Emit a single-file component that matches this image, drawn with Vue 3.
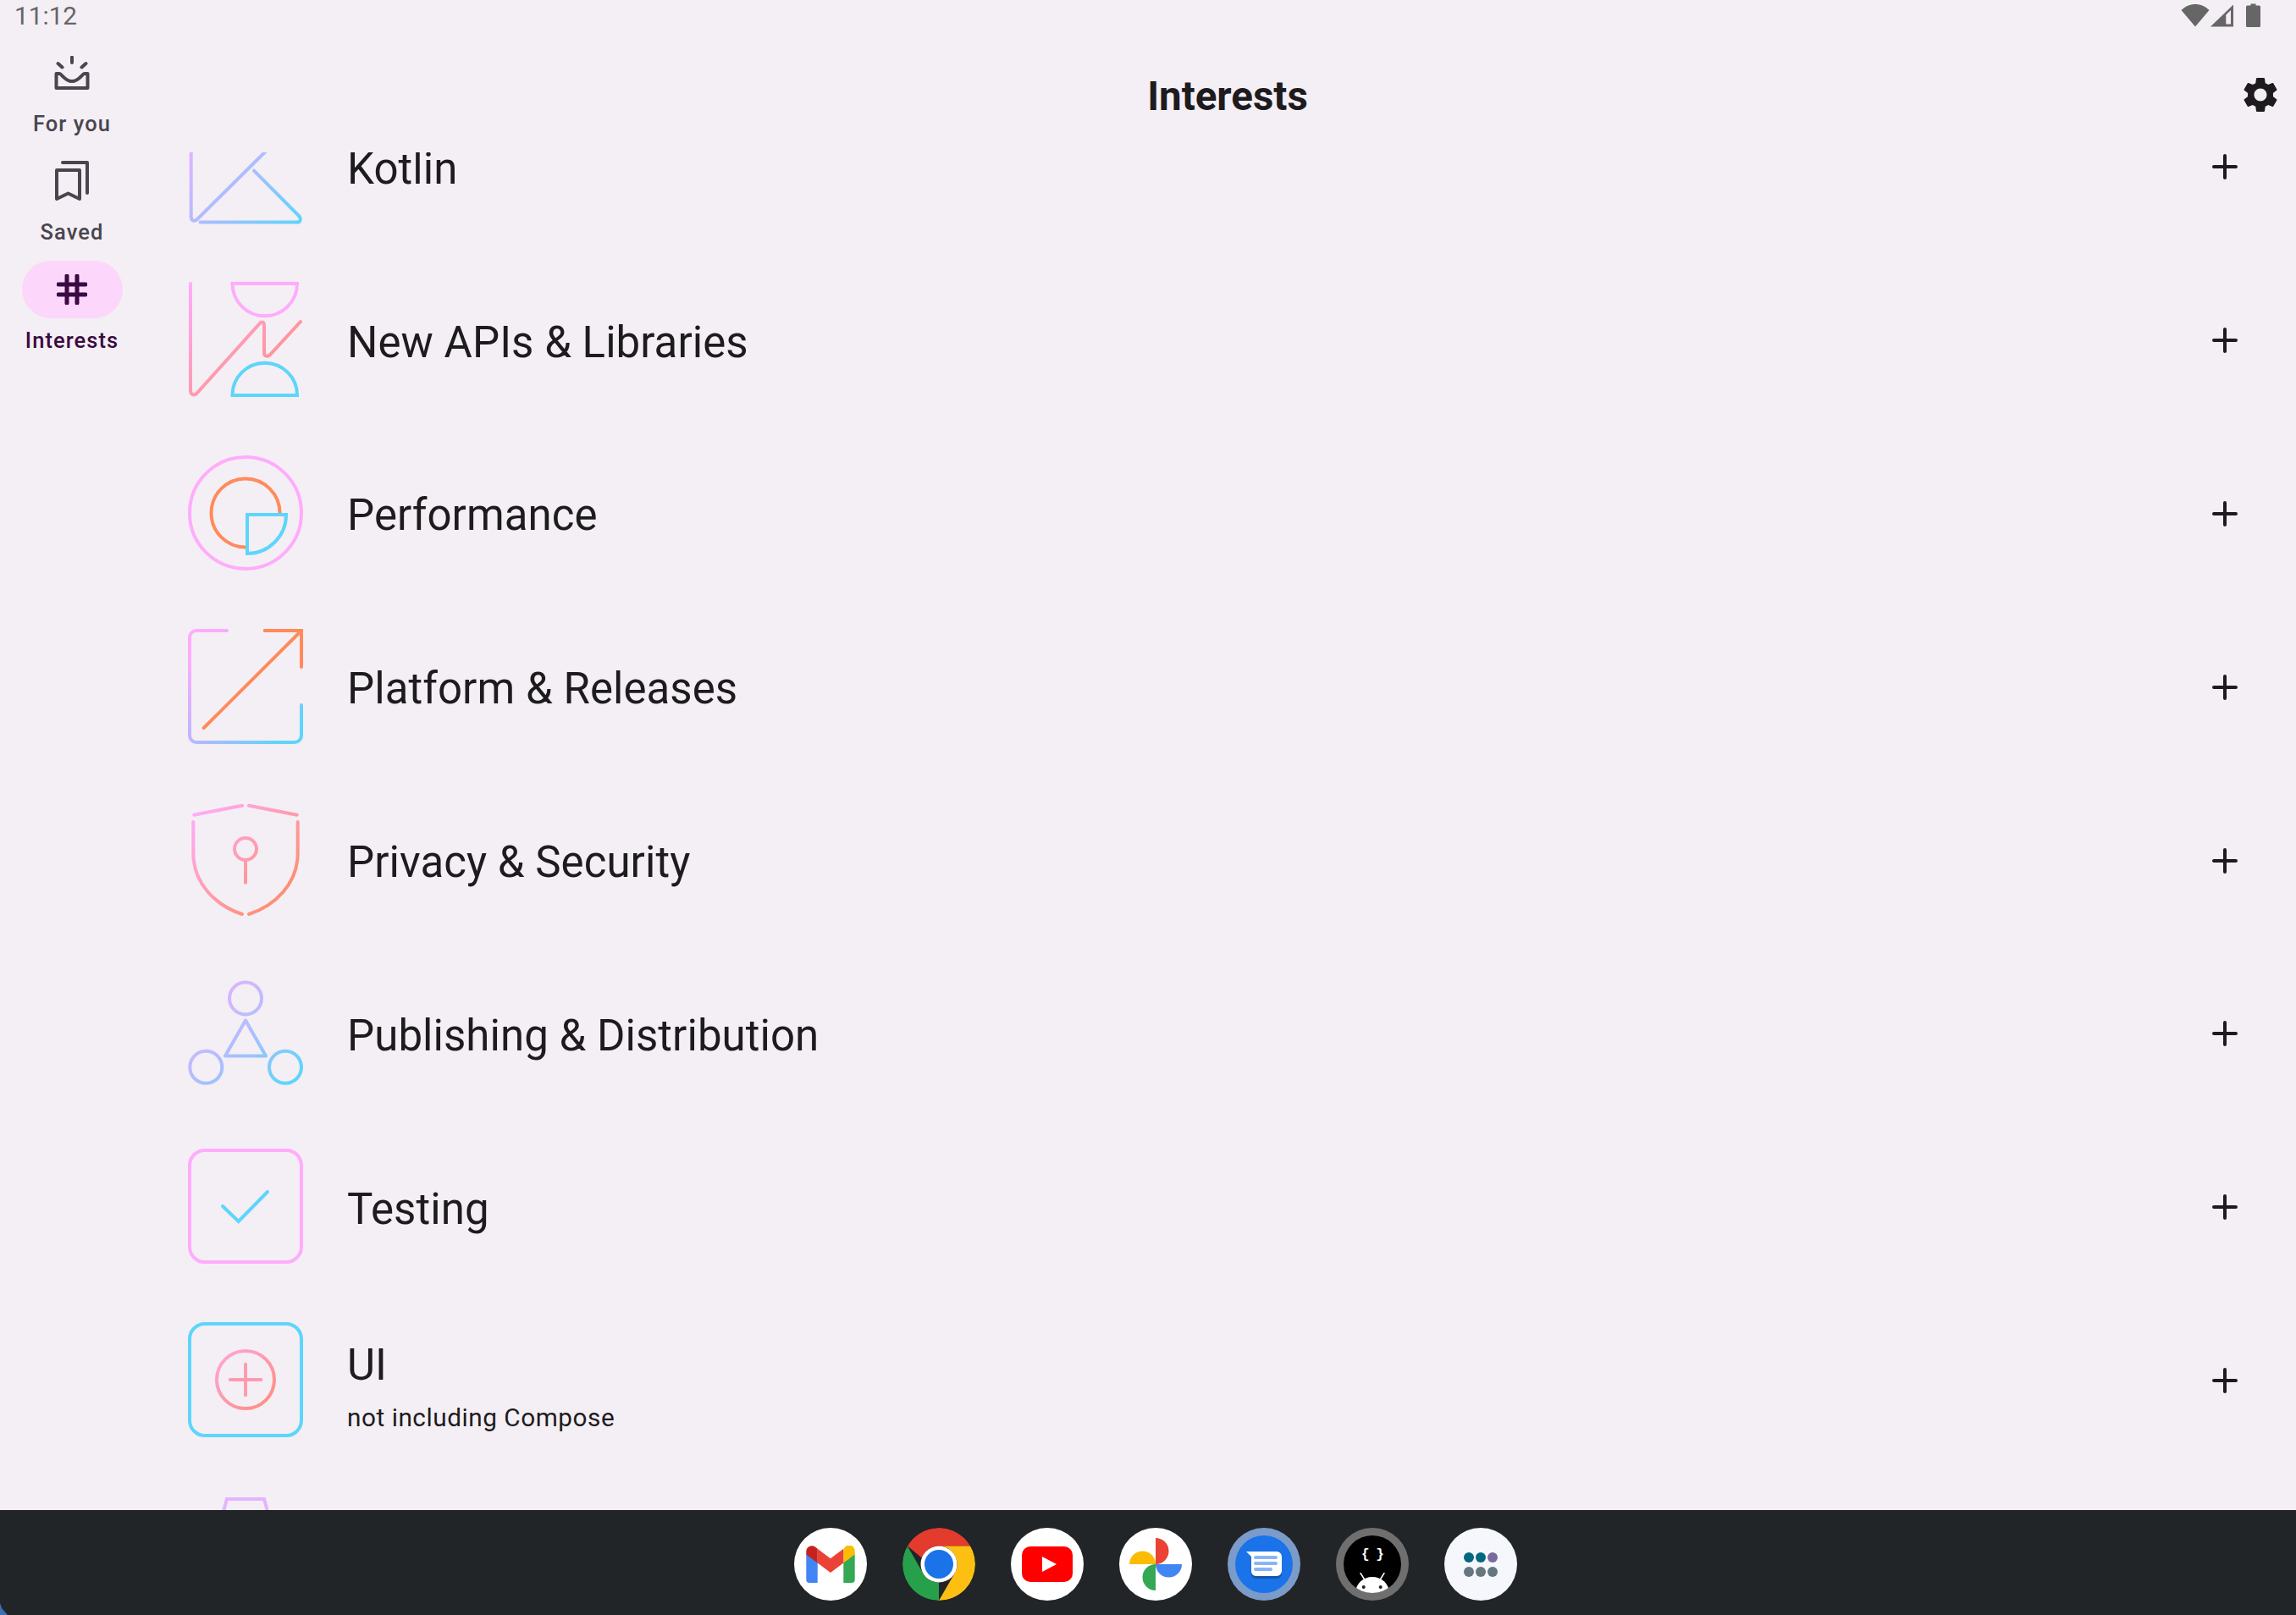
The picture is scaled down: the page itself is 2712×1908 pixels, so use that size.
<template>
  <div class="screen">
    <div class="status">
      <span class="clock">11:12</span>
      <div class="status-icons">
        <svg width="34" height="28" viewBox="0 0 34 28"><path d="M.5 8C5 3.500 11 1 17 1S29 3.500 33.500 8L17 27.500Z" fill="#666" /></svg>
        <svg class="signal" width="27" height="27" viewBox="0 0 27 27"><path d="M0 26.500 27 .5V26.500Z" fill="#666" /><path d="M18.300 12.500 24 7V23.500H18.300Z" fill="#f4eff4" /></svg>
        <svg class="battery" width="17" height="28" viewBox="0 0 17 28"><path d="M5.500 2.500V.5H11.500V2.500H15.500A1.500 1.500 0 0 1 17 4V26.500A1.500 1.500 0 0 1 15.500 28H1.500A1.500 1.500 0 0 1 0 26.500V4A1.500 1.500 0 0 1 1.500 2.500Z" fill="#666" /></svg>
      </div>
    </div>

    <div class="main">
      <nav class="rail">
        <div v-for="item in navItems" :key="item.label" class="rail-item" :class="{ active: item.active }">
          <div class="pill">
            <svg v-if="item.icon === 'foryou'" width="44" height="40" viewBox="0 0 44 40" fill="none" stroke="#49454f" stroke-width="4" stroke-linecap="round" stroke-linejoin="round">
              <path d="M22 1.500V8M5.500 9 10.500 13.500M38.500 9 33.500 13.500" />
              <path d="M7 21H3.500V38H40.500V21H37C34 21 30.500 30 22 30S10 21 7 21Z" />
            </svg>
            <svg v-else-if="item.icon === 'saved'" width="40" height="48" viewBox="0 0 40 48" fill="none" stroke="#49454f" stroke-width="4" stroke-linejoin="round" stroke-linecap="round">
              <path d="M2 11H29V45L15.500 38.500 2 45Z" />
              <path d="M9 2H38V38" />
            </svg>
            <svg v-else width="36" height="36" viewBox="0 0 36 36" fill="none" stroke="#3a0a40" stroke-width="5" stroke-linecap="round">
              <path d="M12 2V34M24 2V34M2 12H34M2 24H34" />
            </svg>
          </div>
          <span class="rail-label">{{ item.label }}</span>
        </div>
      </nav>

      <div class="content">
        <header class="topbar">
          <h1 class="title">Interests</h1>
          <svg class="gear" width="50" height="50" viewBox="0 0 24 24"><path fill="#1d1b1e" d="M19.140 12.940c.040-.300.060-.610.060-.940 0-.320-.020-.640-.070-.940l2.030-1.580a.49.49 0 0 0 .120-.610l-1.920-3.320a.488.488 0 0 0-.590-.220l-2.390.960c-.500-.380-1.030-.700-1.620-.940l-.360-2.540a.484.484 0 0 0-.480-.410h-3.840c-.240 0-.430.170-.470.410l-.360 2.540c-.590.240-1.130.570-1.620.940l-2.390-.960c-.220-.080-.470 0-.590.220L2.740 8.870c-.120.210-.080.470.120.610l2.030 1.580c-.050.300-.090.630-.090.940s.020.640.070.940l-2.030 1.580a.49.49 0 0 0-.120.610l1.920 3.320c.120.220.370.290.590.220l2.390-.960c.500.380 1.030.700 1.620.940l.360 2.540c.050.240.240.410.480.410h3.840c.240 0 .440-.170.470-.410l.360-2.540c.590-.240 1.130-.560 1.620-.940l2.390.960c.220.080.470 0 .590-.220l1.920-3.320c.120-.220.070-.470-.120-.610l-2.010-1.580zM12 15.600c-1.980 0-3.600-1.620-3.600-3.600s1.620-3.600 3.600-3.600 3.600 1.620 3.600 3.600-1.620 3.600-3.600 3.600z" /></svg>
        </header>

        <div class="list">
          <div class="list-inner">
            <div v-for="topic in topics" :key="topic.id" class="row">
              <svg class="topic-icon" width="140" height="140" viewBox="0 0 140 140" fill="none" stroke-width="4" stroke-linecap="round">
                <template v-if="topic.id === 'kotlin'">
                  <defs>
                    <linearGradient id="g-kotlin" gradientUnits="userSpaceOnUse" x1="0" y1="30" x2="130" y2="140">
                      <stop offset="0" stop-color="#f0b0ff" /><stop offset=".5" stop-color="#abbdff" /><stop offset="1" stop-color="#5dd5fc" />
                    </linearGradient>
                  </defs>
                  <path stroke="url(#g-kotlin)" d="M5.700 0V130C5.700 135 10 136 13 133L136 11" />
                  <path stroke="url(#g-kotlin)" d="M80 75.600 133 129C136 132 135 136.600 131 136.600H16.500" />
                </template>
                <template v-else-if="topic.id === 'apis'">
                  <defs>
                    <linearGradient id="g-apis" gradientUnits="userSpaceOnUse" x1="5" y1="0" x2="130" y2="140">
                      <stop offset="0" stop-color="#ffacfd" /><stop offset="1" stop-color="#ff8a70" />
                    </linearGradient>
                  </defs>
                  <path stroke="url(#g-apis)" d="M5 4V130C5 135 9 137 12 134L87 51C90 48 92 50 92 53V86C92 90 96 91 99 88L135 49" />
                  <path stroke="#ffacfd" d="M54.500 4H131A38.250 38.250 0 0 1 54.500 4Z" />
                  <path stroke="#5dd5fc" d="M54.500 136H131A38.250 38.250 0 0 0 54.500 136Z" />
                </template>
                <template v-else-if="topic.id === 'performance'">
                  <circle cx="70" cy="70" r="66" stroke="#ffacfd" />
                  <path stroke="#ff8a5c" stroke-linecap="butt" d="M70 110.500A40.500 40.500 0 1 1 110.500 70" />
                  <path stroke="#5dd5fc" d="M72 72H118A46 46 0 0 1 72 118Z" stroke-linecap="butt" />
                </template>
                <template v-else-if="topic.id === 'platform'">
                  <defs>
                    <linearGradient id="g-platform" gradientUnits="userSpaceOnUse" x1="0" y1="40" x2="110" y2="140">
                      <stop offset="0" stop-color="#ffacfd" /><stop offset=".5" stop-color="#b3b8ff" /><stop offset="1" stop-color="#5dd5fc" />
                    </linearGradient>
                  </defs>
                  <path stroke="url(#g-platform)" d="M48 4H12A8 8 0 0 0 4 12V128A8 8 0 0 0 12 136H128A8 8 0 0 0 136 128V92" />
                  <path stroke="#ff8a5c" d="M92.700 4H136V47M20.700 119 136 4" />
                </template>
                <template v-else-if="topic.id === 'privacy'">
                  <defs>
                    <linearGradient id="g-privacy" gradientUnits="userSpaceOnUse" x1="10" y1="10" x2="130" y2="130">
                      <stop offset="0" stop-color="#ffacfd" /><stop offset="1" stop-color="#ff8a5c" />
                    </linearGradient>
                  </defs>
                  <g stroke="url(#g-privacy)">
                    <path d="M9.300 16.700 66 5.700M74 5.700 130.700 16.700" />
                    <path d="M8.300 25V62C8.300 98 35 124 66 134M131.700 25V62C131.700 98 105 124 74 134" />
                    <circle cx="70" cy="57" r="13" />
                    <path d="M70 70V96.700" />
                  </g>
                </template>
                <template v-else-if="topic.id === 'publishing'">
                  <defs>
                    <linearGradient id="g-publishing" gradientUnits="userSpaceOnUse" x1="20" y1="15" x2="125" y2="125">
                      <stop offset="0" stop-color="#ecb2ff" /><stop offset=".55" stop-color="#a9bfff" /><stop offset="1" stop-color="#5dd5fc" />
                    </linearGradient>
                  </defs>
                  <g stroke="url(#g-publishing)">
                    <circle cx="70" cy="29.500" r="19" />
                    <circle cx="23.300" cy="110.800" r="19" />
                    <circle cx="117" cy="110.800" r="19" />
                    <path stroke-linejoin="round" d="M70 55.500 94 97.500H46Z" />
                  </g>
                </template>
                <template v-else-if="topic.id === 'testing'">
                  <rect x="4" y="4" width="132" height="132" rx="18" stroke="#ffacfd" />
                  <path stroke="#5dd5fc" d="M43 70 61.700 88 96 53" />
                </template>
                <template v-else-if="topic.id === 'ui'">
                  <defs>
                    <linearGradient id="g-ui" gradientUnits="userSpaceOnUse" x1="40" y1="40" x2="100" y2="100">
                      <stop offset="0" stop-color="#ffa5d6" /><stop offset="1" stop-color="#ff8d80" />
                    </linearGradient>
                  </defs>
                  <rect x="4" y="4" width="132" height="132" rx="18" stroke="#5dd5fc" />
                  <circle cx="70" cy="70" r="34" stroke="url(#g-ui)" />
                  <path stroke="#ff9ab0" d="M51.700 70H88.300M70 51.700V88.300" />
                </template>
                <template v-else>
                  <path stroke="#e4b4ff" stroke-linecap="butt" d="M42 28 48 6H92L98 28" />
                </template>
              </svg>
              <div class="topic-text">
                <div class="topic-name">{{ topic.name }}</div>
                <div v-if="topic.sub" class="topic-sub">{{ topic.sub }}</div>
              </div>
              <svg v-if="topic.name" class="add" width="30" height="30" viewBox="0 0 30 30" stroke="#1d1b1e" stroke-width="4" stroke-linecap="round"><path d="M15 2V28M2 15H28" /></svg>
            </div>
          </div>
        </div>
      </div>
    </div>

    <div class="dock">
      <div class="app white">
        <svg width="58" height="44" viewBox="0 0 60 46">
          <path d="M0 10 14 20V46H4A4 4 0 0 1 0 42Z" fill="#4285f4" />
          <path d="M46 20 60 10V42A4 4 0 0 1 56 46H46Z" fill="#34a853" />
          <path d="M46 6A7 7 0 0 1 60 7V11L46 21.500Z" fill="#fbbc04" />
          <path d="M14 4 30 16 46 4V21.500L30 33.500 14 21.500Z" fill="#ea4335" />
          <path d="M0 7A7 7 0 0 1 11 1.500L14 4V21.500L0 11Z" fill="#c5221f" />
        </svg>
      </div>
      <div class="app">
        <svg width="86" height="86" viewBox="0 0 86 86">
          <path d="M43 0A43 43 0 0 1 80.200 21.500H43A21.500 21.500 0 0 0 22.800 35.500L6 21.500A43 43 0 0 1 43 0Z" fill="#e33b2e" />
          <path d="M5.800 21.500 24.400 53.800A21.500 21.500 0 0 0 43 64.500L43 86A43 43 0 0 1 5.800 21.500Z" fill="#27a04b" />
          <path d="M80.200 21.500A43 43 0 0 1 43 86L61.600 53.800A21.500 21.500 0 0 0 61.600 32.200 21.500 21.500 0 0 0 43 21.500Z" fill="#fdc012" />
          <circle cx="43" cy="43" r="21.500" fill="#fff" />
          <circle cx="43" cy="43" r="17" fill="#1a73e8" />
        </svg>
      </div>
      <div class="app white">
        <svg width="60" height="42" viewBox="0 0 60 42">
          <rect width="60" height="42" rx="10" fill="#f00" />
          <path d="M24 12 41 21 24 30Z" fill="#fff" />
        </svg>
      </div>
      <div class="app white">
        <svg width="62" height="62" viewBox="0 0 62 62">
          <path d="M31 0A15.500 15.500 0 0 1 31 31Z" fill="#ea4335" />
          <path d="M31 31H62A15.500 15.500 0 0 1 31 31Z" fill="#4285f4" />
          <path d="M31 31V62A15.500 15.500 0 0 1 31 31Z" fill="#34a853" />
          <path d="M0 31A15.500 15.500 0 0 1 31 31Z" fill="#fbbc04" />
        </svg>
      </div>
      <div class="app ring blue">
        <div class="app-inner msg">
          <svg width="42" height="33" viewBox="0 0 42 33">
            <path d="M6 4H36A6 6 0 0 1 42 10V26A6 6 0 0 1 36 33H12A6 6 0 0 1 6 26Z" fill="#1557b0" />
            <path d="M0 1H36A6 6 0 0 1 42 7V24A6 6 0 0 1 36 30H11A6 6 0 0 1 6 24V7Z" fill="#fff" />
            <path d="M11 8H35M11 15H35M11 22H29" stroke="#8ab4f8" stroke-width="4" stroke-linecap="round" />
          </svg>
        </div>
      </div>
      <div class="app ring gray">
        <div class="app-inner studio">
          <span class="braces">{ }</span>
          <svg class="droid" width="44" height="24" viewBox="0 0 44 24">
            <path d="M7.700 0 12.700 8M36.300 0 31.300 8" stroke="#fff" stroke-width="1.500" />
            <path d="M2 24A20 19 0 0 1 42 24Z" fill="#fff" />
            <circle cx="11.700" cy="17" r="2" fill="#222" />
            <circle cx="31.700" cy="17" r="2" fill="#222" />
          </svg>
        </div>
      </div>
      <div class="app lilac">
        <div class="dots">
          <i v-for="(dot, i) in dots" :key="i" :style="{ background: dot }"></i>
        </div>
      </div>
    </div>
    <div class="corner"></div>
  </div>
</template>

<script setup>
const navItems = [
  { label: "For you", icon: "foryou" },
  { label: "Saved", icon: "saved" },
  { label: "Interests", icon: "interests", active: true },
];

const topics = [
  { id: "kotlin", name: "Kotlin" },
  { id: "apis", name: "New APIs & Libraries" },
  { id: "performance", name: "Performance" },
  { id: "platform", name: "Platform & Releases" },
  { id: "privacy", name: "Privacy & Security" },
  { id: "publishing", name: "Publishing & Distribution" },
  { id: "testing", name: "Testing" },
  { id: "ui", name: "UI", sub: "not including Compose" },
  { id: "next", name: "" },
];

const dots = ["#00677f", "#00677f", "#7a6a9b", "#64777f", "#64777f", "#64777f"];
</script>

<style>
html,
body {
  margin: 0;
  background: #f4eff4;
}
</style>

<style scoped>
.screen {
  width: 2712px;
  height: 1908px;
  display: flex;
  flex-direction: column;
  position: relative;
  overflow: hidden;
  background: #f4eff4;
  font-family: Roboto, sans-serif;
  color: #1d1b1e;
}

.status {
  position: absolute;
  top: 0;
  left: 0;
  right: 0;
  height: 36px;
  padding: 0 42px 0 17px;
  display: flex;
  align-items: center;
  justify-content: space-between;
  color: #666;
  font-size: 29.750px;
}

.status-icons {
  display: flex;
  align-items: center;
}

.signal {
  margin-left: 1px;
}

.battery {
  margin-left: 15px;
}

.main {
  flex: 1;
  min-height: 0;
  display: flex;
}

.rail {
  width: 170px;
  flex-shrink: 0;
  padding-top: 52px;
  display: flex;
  flex-direction: column;
}

.rail-item {
  height: 128px;
  display: flex;
  flex-direction: column;
  align-items: center;
  color: #49454f;
}

.rail-item.active {
  color: #3a0a40;
}

.pill {
  width: 119px;
  height: 68px;
  border-radius: 34px;
  display: flex;
  align-items: center;
  justify-content: center;
}

.active .pill {
  background: #fdd6fb;
}

.rail-label {
  margin-top: 8px;
  font-size: 25.500px;
  line-height: 36px;
  font-weight: 500;
  letter-spacing: 1.060px;
}

.content {
  flex: 1;
  min-width: 0;
  display: flex;
  flex-direction: column;
}

.topbar {
  height: 180px;
  flex-shrink: 0;
  padding: 0 0 44px 18px;
  box-sizing: border-box;
  display: flex;
  align-items: flex-end;
  justify-content: center;
  position: relative;
}

.title {
  margin: 0;
  font-size: 47.500px;
  line-height: 44px;
  font-weight: 700;
}

.gear {
  position: absolute;
  right: 17px;
  top: 87px;
}

.list {
  flex: 1;
  min-height: 0;
  overflow: hidden;
}

.list-inner {
  margin-top: -86px;
}

.row {
  height: 204.800px;
  padding: 0 69px 0 50px;
  display: flex;
  align-items: center;
}

.topic-icon {
  flex-shrink: 0;
}

.topic-text {
  flex: 1;
  margin-left: 50px;
  padding-top: 7px;
}

.topic-name {
  font-size: 51px;
  line-height: 44px;
  letter-spacing: .05px;
}

.topic-sub {
  margin-top: 20px;
  margin-bottom: -19px;
  font-size: 29.750px;
  line-height: 40px;
  letter-spacing: .530px;
}

.add {
  margin-top: 2px;
}

.dock {
  height: 124px;
  flex-shrink: 0;
  padding: 4px 0 0 18px;
  box-sizing: border-box;
  background: #212528;
  display: flex;
  align-items: center;
  justify-content: center;
  gap: 42px;
}

.app {
  width: 86px;
  height: 86px;
  border-radius: 50%;
  display: flex;
  align-items: center;
  justify-content: center;
  overflow: hidden;
}

.white {
  background: #fff;
}

.lilac {
  background: #f6f6fd;
}

.ring.blue {
  background: #7b9ccb;
}

.ring.gray {
  background: #6f6f6f;
}

.app-inner {
  width: 68px;
  height: 68px;
  border-radius: 50%;
  display: flex;
  align-items: center;
  justify-content: center;
  position: relative;
  overflow: hidden;
}

.msg {
  background: #1a73e8;
}

.studio {
  background: #000;
}

.braces {
  position: absolute;
  top: 14px;
  left: 0;
  right: 0;
  text-align: center;
  color: #fff;
  font-family: "Liberation Mono", monospace;
  font-size: 16px;
  line-height: 18px;
  font-weight: 700;
  letter-spacing: -1px;
}

.droid {
  position: absolute;
  left: 12px;
  bottom: 0;
}

.dots {
  width: 40px;
  display: grid;
  grid-template-columns: repeat(3, 12px);
  column-gap: 2px;
  row-gap: 5px;
}

.dots i {
  width: 12px;
  height: 12px;
  border-radius: 50%;
}

.corner {
  position: absolute;
  left: 0;
  bottom: 0;
  width: 9px;
  height: 14px;
  background: #3f6fb0;
  clip-path: polygon(0 0, 25% 45%, 100% 100%, 0 100%);
}
</style>
